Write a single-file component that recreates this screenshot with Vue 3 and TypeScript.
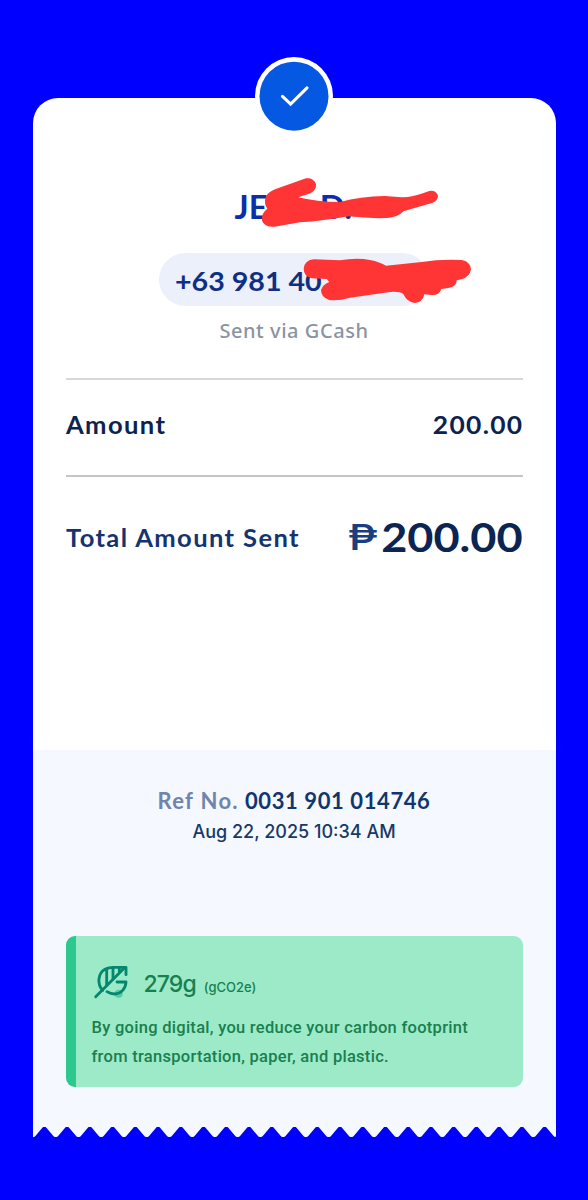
<script setup lang="ts">
const teeth = 23
const pitch = 523 / teeth

/* Torn lower edge: one rounded notch per tooth. */
function tornEdge(): string {
  let d = 'M0 0H523V10'
  for (let i = teeth - 1; i >= 0; i--) {
    const x = i * pitch
    const f = (n: number) => (x + n).toFixed(2)
    d += `L${f(pitch - 0.6)} 11Q${f(pitch - 1.6)} 11 ${f(pitch - 2.4)} 10.1L${f(pitch / 2 + 1.8)} 1.4Q${f(pitch / 2)} -0.2 ${f(pitch / 2 - 1.8)} 1.4L${f(2.4)} 10.1Q${f(1.6)} 11 ${f(0.6)} 11`
  }
  return d + 'L0 11Z'
}
</script>

<template>
  <main class="screen">
    <article class="receipt">
      <div class="badge">
        <svg width="78" height="78" viewBox="0 0 78 78">
          <circle cx="39" cy="39" r="39" fill="#fff" />
          <circle cx="39" cy="39.2" r="34.5" fill="#0458e2" />
          <path d="M27.5 39.3L35.6 47L52 30.8" fill="none" stroke="#fff" stroke-width="3.1" stroke-linecap="round" stroke-linejoin="miter" />
        </svg>
      </div>

      <section class="details">
        <header class="recipient">
          <h1 class="name"><span>JE</span><span>D.</span></h1>
          <p class="phone"><span>+63 981 40</span></p>
          <p class="via">Sent via GCash</p>
          <svg class="scribble" width="340" height="180" viewBox="0 0 1020 540" fill="#ff3535">
            <path d="M376 84Q382 67 405 58L498 25Q520 22 528 42Q530 60 512 70L475 82Q530 96 600 96Q660 80 735 78L785 82Q815 83 868 63Q888 60 894 77Q894 92 876 99L790 124Q775 142 740 144Q685 146 625 139Q550 153 480 157L404 170Q373 172 366 152Q363 130 382 116Q372 103 376 84Z" />
            <path d="M491 296Q494 270 522 268L600 271Q650 262 690 270Q720 276 738 287L845 276Q900 267 965 270Q990 274 993 298Q990 320 965 328L950 331Q951 350 925 354L904 357Q898 377 874 375L853 373Q848 398 824 399Q801 396 790 372Q780 364 750 366L630 383Q595 393 568 390Q543 383 543 360Q548 344 568 336L560 327L515 325Q491 318 491 296Z" />
          </svg>
        </header>

        <div class="row amount">
          <span class="label">Amount</span>
          <span class="value">200.00</span>
        </div>
        <div class="row total">
          <span class="label">Total Amount Sent</span>
          <span class="sum"><span class="peso">₱</span><span class="figure">200.00</span></span>
        </div>
      </section>

      <section class="reference">
        <p class="number"><span class="caption">Ref No.</span><span class="digits">0031 901 014746</span></p>
        <p class="date">Aug 22, 2025 10:34 AM</p>

        <aside class="carbon">
          <div class="saving">
            <svg class="leaf" width="36" height="36" viewBox="0 0 108 108" fill="none" stroke="#05876f" stroke-width="8.5" stroke-linecap="round" stroke-linejoin="round">
              <circle cx="77" cy="92" r="12" fill="#58c9a0" stroke="none" />
              <path d="M8 101L94 15" />
              <path d="M29 82C12 63 14 32 36 19Q47 13 61 13H99V35" />
              <path d="M41 18V66M60 13V48" />
              <path d="M79 13V27" />
              <path d="M72 57H99C98 78 83 93 65 93Q53 93 42 86" />
            </svg>
            <span class="grams">279g</span>
            <span class="unit">(gCO2e)</span>
          </div>
          <p class="note">By going digital, you reduce your carbon footprint<br />from transportation, paper, and plastic.</p>
        </aside>
      </section>

      <svg class="torn" width="523" height="12" viewBox="0 0 523 12">
        <path :d="tornEdge()" fill="#f5f8fe" />
      </svg>
    </article>
  </main>
</template>

<style>
body {
  margin: 0;
  background: #0000fe;
}
</style>

<style scoped>
.screen {
  box-sizing: border-box;
  width: 588px;
  height: 1200px;
  padding: 98px 32.5px 0;
  background: #0000fe;
  font-family: Lato, "Liberation Sans", sans-serif;
  white-space: nowrap;
}
.receipt {
  position: relative;
  width: 523px;
}
.badge {
  position: absolute;
  top: -41px;
  left: 222.5px;
  width: 78px;
  height: 78px;
}
svg {
  display: block;
}
h1,
p {
  margin: 0;
}
.details {
  box-sizing: border-box;
  height: 652px;
  padding: 85px 33px 0;
  border-radius: 25px 25px 0 0;
  background: #fff;
}
.recipient {
  position: relative;
  height: 195px;
}
.name {
  display: flex;
  gap: 52px;
  padding-left: 169px;
  line-height: 47px;
  font-size: 33px;
  font-weight: 700;
  color: #0a2fa8;
}
.phone {
  box-sizing: border-box;
  width: 270px;
  height: 53px;
  margin: 23px 0 0 93px;
  padding-left: 16.5px;
  border-radius: 27px;
  background: #ecf0fa;
  line-height: 55px;
  font-size: 27px;
  font-weight: 700;
  color: #0f2f85;
}
.phone span {
  display: inline-block;
  transform: scaleX(1.06);
  transform-origin: left;
}
.via {
  margin-top: 10px;
  line-height: 30px;
  text-align: center;
  font-family: "Noto Sans", sans-serif;
  font-size: 20px;
  font-weight: 500;
  letter-spacing: 0.55px;
  color: #8b93a3;
}
.scribble {
  position: absolute;
  top: -13px;
  left: 74.5px;
}
.row {
  display: flex;
  box-sizing: border-box;
  align-items: center;
  justify-content: space-between;
  color: #0c2350;
  font-weight: 700;
}
.amount {
  height: 97px;
  padding-bottom: 6px;
  border-top: 2px solid #d5d7d9;
  font-size: 24px;
}
.label {
  font-size: 24px;
  letter-spacing: 1.3px;
  transform: scaleX(1.065);
  transform-origin: left;
}
.value {
  margin-right: -1.5px;
  letter-spacing: 1.2px;
  transform: scaleX(1.1);
  transform-origin: right;
}
.total {
  height: 125px;
  padding-bottom: 3px;
  border-top: 2px solid #c2c6ca;
}
.total .label {
  color: #15346f;
}
.sum {
  display: flex;
  align-items: center;
  line-height: 48px;
}
.peso {
  margin-right: 16px;
  font-family: Inter, sans-serif;
  font-size: 35px;
  font-weight: 500;
  color: #1a3e7e;
  transform: scaleX(1.26);
  transform-origin: right;
}
.figure {
  font-size: 41px;
  color: #0b2452;
  transform: scaleX(1.1);
  transform-origin: right;
}
.reference {
  box-sizing: border-box;
  height: 377px;
  padding: 35px 33px 0;
  background: #f5f8fe;
}
.number {
  display: flex;
  justify-content: center;
  gap: 6px;
  line-height: 32px;
  font-size: 22px;
  font-weight: 700;
  color: #12356f;
}
.caption {
  color: #7084ac;
  letter-spacing: 1.3px;
}
.digits {
  letter-spacing: 0.6px;
}
.date {
  line-height: 29px;
  text-align: center;
  font-family: Inter, sans-serif;
  font-size: 18px;
  font-weight: 500;
  color: #183967;
}
.carbon {
  box-sizing: border-box;
  width: 457px;
  height: 151px;
  margin-top: 90px;
  padding: 27px 0 0 16px;
  border-left: 10px solid #2cc88e;
  border-radius: 9px;
  background: #9deac8;
  color: #18804f;
}
.saving {
  display: flex;
  height: 49.5px;
  align-items: baseline;
}
.leaf {
  align-self: flex-start;
  margin-left: 1px;
}
.grams {
  margin-left: 15px;
  line-height: 42px;
  font-size: 23px;
  font-weight: 500;
  letter-spacing: -0.9px;
  font-family: Inter, sans-serif;
}
.unit {
  margin-left: 8px;
  font-size: 13px;
  font-weight: 500;
  font-family: Inter, sans-serif;
}
.note {
  line-height: 29px;
  font-family: Roboto, sans-serif;
  font-size: 16.5px;
  font-weight: 500;
  letter-spacing: 0.28px;
}
.torn {
  margin-top: -1px;
}
</style>
